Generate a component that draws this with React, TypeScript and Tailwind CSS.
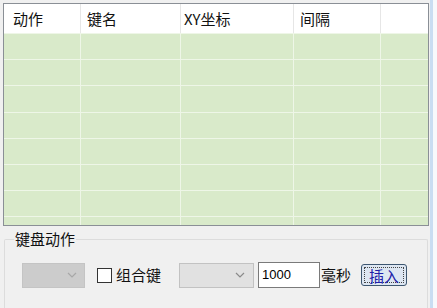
import React from "react";

const cols = [
  { label: "动作", w: "w-[77px]", pl: "pl-[9px]" },
  { label: "键名", w: "w-[100px]", pl: "pl-[6px]" },
  { label: "XY坐标", w: "w-[113px]", pl: "pl-[3px]" },
  { label: "间隔", w: "w-[87px]", pl: "pl-[6px]" },
  { label: "", w: "flex-1", pl: "" },
];

function Chevron({ color }: { color: string }) {
  return (
    <svg width="10" height="6" viewBox="0 0 10 6" fill="none">
      <path d="M1 1l4 4 4-4" stroke={color} strokeWidth="1.2" />
    </svg>
  );
}

export default function App() {
  const rows = Array.from({ length: 8 });
  return (
    <div
      className="relative w-[437px] h-[308px] bg-[#f0f0f0] overflow-hidden flex"
      style={{ fontFamily: '"Noto Sans CJK SC", "Noto Sans", sans-serif' }}
    >
      <div className="w-[430px] flex flex-col pl-[3px] pt-[3px]">
        {/* table */}
        <div className="w-[426px] h-[223px] border border-[#8a8f96] bg-[#d9eaca] flex flex-col overflow-hidden">
          <div className="h-[29px] bg-white flex shrink-0">
            {cols.map((c, i) => (
              <div
                key={i}
                className={`${c.w} ${c.pl} h-full flex items-center pt-[1px] text-[15px] text-[#111] ${i < 4 ? "border-r border-[#e6e6e6]" : ""}`}
              >
                {c.label}
              </div>
            ))}
          </div>
          {rows.map((_, r) => (
            <div key={r} className="h-[26.2px] flex shrink-0 border-t border-[#eef6e7]">
              {cols.map((c, i) => (
                <div
                  key={i}
                  className={`${c.w} h-full ${i < 4 ? "border-r border-[#eef6e7]" : ""}`}
                />
              ))}
            </div>
          ))}
        </div>

        {/* group box */}
        <div className="relative mt-[13px] ml-[1px] w-[424px] flex-1 border border-b-0 border-[#dcdcdc] rounded-t-[2px]">
          <div className="absolute left-[9px] top-[-10px] px-[1px] bg-[#f0f0f0] text-[15px] leading-[18px] text-[#111]">
            键盘动作
          </div>
          <div className="flex items-center pt-[22px] pl-[17px]">
            <div className="w-[63px] h-[25px] bg-[#cccccc] border border-[#c4c4c4] flex items-center justify-end pr-[7px]">
              <Chevron color="#a8a8a8" />
            </div>
            <div className="ml-[12px] w-[15px] h-[15px] bg-white border border-[#333333]" />
            <div className="ml-[4px] text-[15px] text-[#111]">组合键</div>
            <div className="ml-[18px] w-[75px] h-[25px] bg-[#e1e1e1] border border-[#c2c2c2] flex items-center justify-end pr-[8px]">
              <Chevron color="#8a8a8a" />
            </div>
            <div className="ml-[4px] w-[62px] h-[26px] bg-white border border-[#7a7a7a] flex items-center pl-[3px] text-[13px] text-black" style={{ fontFamily: '"Liberation Sans", Arial, sans-serif' }}>
              1000
            </div>
            <div className="ml-[1px] text-[15px] text-[#111]">毫秒</div>
            <div className="ml-[10px] w-[46px] h-[22px] rounded-[3px] border border-[#3d5670] bg-[#dde6f2] p-[2px]">
              <div className="w-full h-full border border-dotted border-[#444] flex items-center justify-center text-[15px] leading-none text-[#2020a8]">
                插入
              </div>
            </div>
          </div>
        </div>
      </div>
      <div className="w-[3px] h-full bg-[#c9ddf2] mt-0" />
      <div className="flex-1 h-full bg-[#f7f9fc]" />
    </div>
  );
}
